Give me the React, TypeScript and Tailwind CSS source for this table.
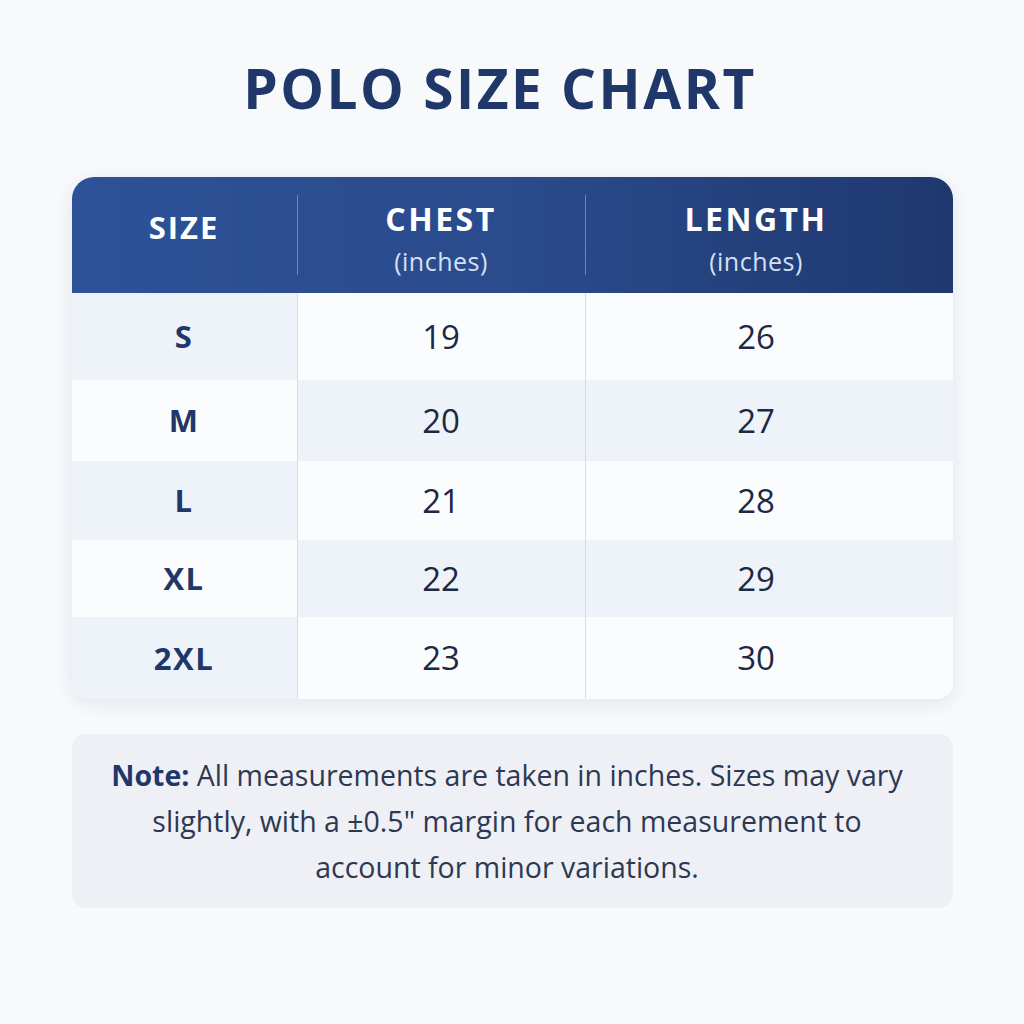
import React from "react";

const rows = [
  { size: "S", chest: "19", length: "26", h: "h-[87px]" },
  { size: "M", chest: "20", length: "27", h: "h-[81px]" },
  { size: "L", chest: "21", length: "28", h: "h-[79px]" },
  { size: "XL", chest: "22", length: "29", h: "h-[77px]" },
  { size: "2XL", chest: "23", length: "30", h: "h-[82px]" },
];

export default function App() {
  return (
    <div className="w-[1024px] h-[1024px] bg-[#f8f9fb] flex flex-col items-center font-['Open_Sans',sans-serif]">
      <h1 className="mt-[56px] mr-[24px] text-[55px] leading-[64px] font-bold text-[#1f3769] tracking-[2.5px]">
        POLO SIZE CHART
      </h1>

      <div className="mt-[57px] w-[881px] rounded-t-[22px] rounded-b-[16px] bg-white shadow-[0_4px_18px_rgba(30,50,100,0.10)] overflow-hidden">
        <div className="h-[116px] flex bg-gradient-to-r from-[#2d5298] via-[#2a4b8c] to-[#1f386f] text-white">
          <div className="w-[225px] flex items-center justify-center pb-[16px]">
            <span className="text-[31px] font-bold tracking-[2px]">SIZE</span>
          </div>
          <div className="w-px my-[18px] bg-[#6d87bd]" />
          <div className="w-[287px] flex flex-col items-center justify-center pt-[6px]">
            <span className="text-[32px] leading-[38px] font-bold tracking-[2.5px]">CHEST</span>
            <span className="text-[25px] leading-[30px] text-[#d7e0f2] mt-[8px] tracking-[0.5px]">(inches)</span>
          </div>
          <div className="w-px my-[18px] bg-[#6d87bd]" />
          <div className="flex-1 flex flex-col items-center justify-center pt-[6px] pr-[26px]">
            <span className="text-[32px] leading-[38px] font-bold tracking-[2.5px]">LENGTH</span>
            <span className="text-[25px] leading-[30px] text-[#d7e0f2] mt-[8px] tracking-[0.5px]">(inches)</span>
          </div>
        </div>
        {rows.map((r, i) => {
          const sizeBg = i % 2 === 0 ? "bg-[#eef2f9]" : "bg-[#fbfcfe]";
          const dataBg = i % 2 === 0 ? "bg-[#fbfcfe]" : "bg-[#eef2f9]";
          return (
            <div key={r.size} className={`flex ${r.h}`}>
              <div className={`w-[225px] flex items-center justify-center ${sizeBg}`}>
                <span className="text-[31px] font-bold text-[#1f3769] tracking-[1.5px]">{r.size}</span>
              </div>
              <div className="w-px bg-[#d6dce7]" />
              <div className={`w-[287px] flex items-center justify-center ${dataBg}`}>
                <span className="text-[33px] text-[#1c2844]">{r.chest}</span>
              </div>
              <div className="w-px bg-[#d6dce7]" />
              <div className={`flex-1 flex items-center justify-center pr-[26px] ${dataBg}`}>
                <span className="text-[33px] text-[#1c2844]">{r.length}</span>
              </div>
            </div>
          );
        })}
      </div>

      <div className="mt-[35px] w-[881px] h-[174px] rounded-[14px] bg-[#eef0f6] flex items-center justify-center pr-[10px]">
        <p className="text-center text-[28.5px] leading-[46px] text-[#2d3852] whitespace-nowrap">
          <span className="font-bold text-[#1f3769]">Note:</span> All measurements are taken in inches. Sizes may vary
          <br />
          slightly, with a ±0.5" margin for each measurement to
          <br />
          account for minor variations.
        </p>
      </div>
    </div>
  );
}
